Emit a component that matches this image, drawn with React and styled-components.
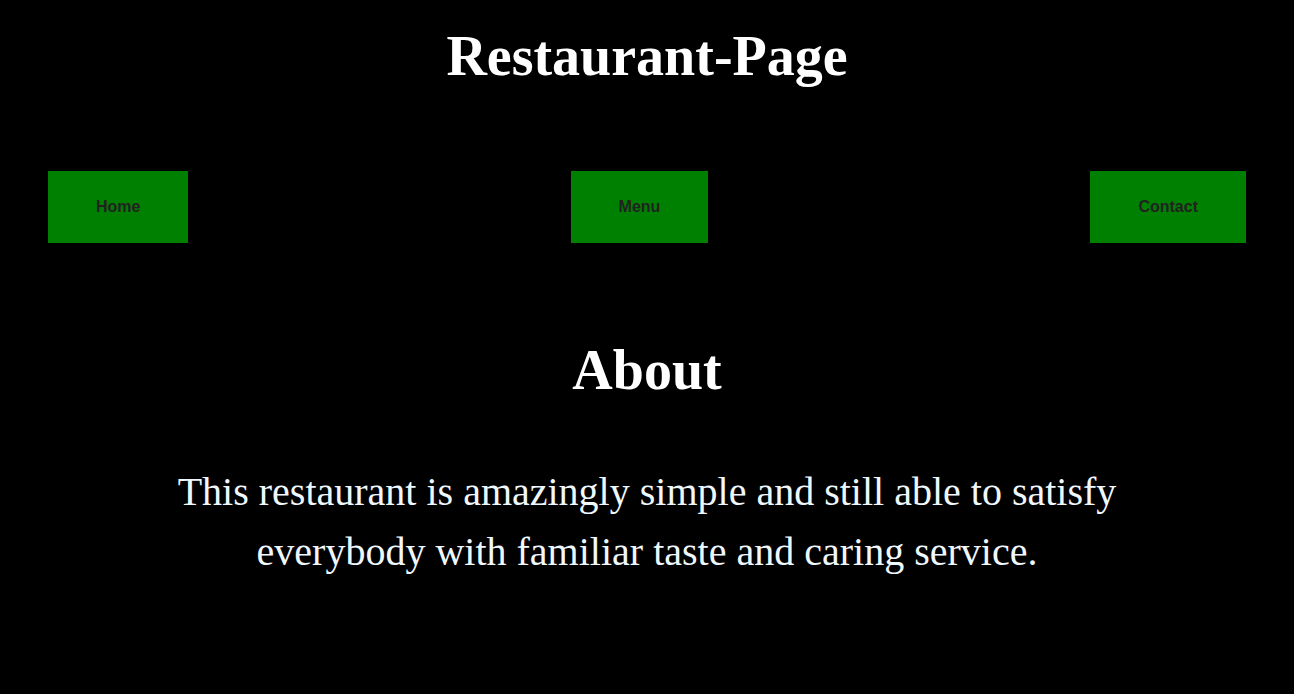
import React from "react";
import styled, { createGlobalStyle } from "styled-components";

const Global = createGlobalStyle`
  html, body {
    margin: 0;
    padding: 0;
    background: #000;
  }
  body {
    font-family: "Liberation Serif", "Times New Roman", serif;
    color: #fff;
  }
`;

const Page = styled.div`
  min-height: 694px;
  background: #000;
  display: flex;
  flex-direction: column;
  align-items: stretch;
`;

const Title = styled.h1`
  margin: 25px 0 0;
  font-size: 56px;
  font-weight: bold;
  line-height: 62px;
  text-align: center;
  color: #fff;
`;

const Nav = styled.nav`
  display: flex;
  justify-content: space-between;
  align-items: center;
  padding: 0 48px;
  margin-top: 84px;
`;

const NavButton = styled.button`
  height: 72px;
  padding: 0 48px;
  border: none;
  background: #008000;
  color: #222;
  font-family: "Liberation Sans", Arial, sans-serif;
  font-weight: bold;
  font-size: 16px;
  cursor: pointer;
`;

const Section = styled.main`
  display: flex;
  flex-direction: column;
  align-items: center;
  margin-top: 96px;
`;

const Heading = styled.h2`
  margin: 0;
  font-size: 56px;
  font-weight: bold;
  line-height: 62px;
  color: #fff;
`;

const Text = styled.p`
  margin: 61px 0 0;
  width: 80%;
  max-width: 1040px;
  font-size: 40px;
  line-height: 60px;
  text-align: center;
  color: aliceblue;
`;

export default function App() {
  return (
    <>
      <Global />
      <Page>
        <Title>Restaurant-Page</Title>
        <Nav>
          <NavButton>Home</NavButton>
          <NavButton>Menu</NavButton>
          <NavButton>Contact</NavButton>
        </Nav>
        <Section>
          <Heading>About</Heading>
          <Text>
            This restaurant is amazingly simple and still able to satisfy
            everybody with familiar taste and caring service.
          </Text>
        </Section>
      </Page>
    </>
  );
}
